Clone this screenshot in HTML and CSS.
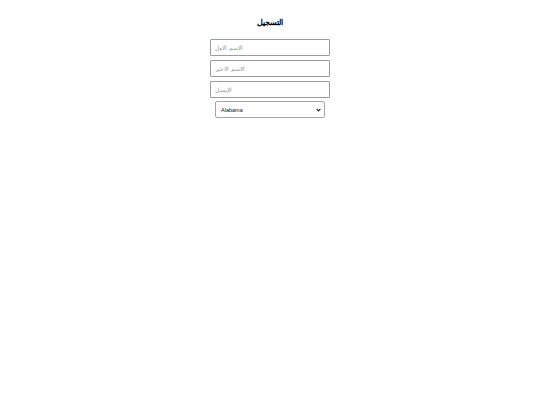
FILE: index.html
```html
<!DOCTYPE html>
<html lang="ar">
<head>
<meta charset="utf-8">
<link rel="stylesheet" href="styles.css">
</head>
<body>
<main class="page">
  <h1 class="title" dir="rtl">التسجيل</h1>
  <form class="form">
    <input class="field" type="text" placeholder="الاسم الأول">
    <input class="field" type="text" placeholder="الاسم الأخير">
    <input class="field" type="email" placeholder="الإيميل">
    <div class="select-wrap">
      <select class="state">
        <option>Alabama</option>
        <option>Alaska</option>
      </select>
      <svg class="arrow" width="5" height="4" viewBox="0 0 5 4"><path d="M0.6 0.8 L2.5 2.8 L4.4 0.8" fill="none" stroke="#222" stroke-width="1.2"/></svg>
    </div>
  </form>
</main>
</body>
</html>
```

FILE: styles.css
```css
html, body {
  margin: 0;
  padding: 0;
  background: #fff;
}
body {
  font-family: "Liberation Sans", Arial, sans-serif;
  width: 540px;
  height: 405px;
}
.page {
  display: flex;
  flex-direction: column;
  align-items: center;
  padding-top: 17px;
}
.title {
  margin: 0 0 10px 0;
  font-size: 8px;
  font-weight: bold;
  line-height: 12px;
  color: #000;
}
.form {
  display: flex;
  flex-direction: column;
  align-items: center;
  gap: 4px;
}
.field {
  box-sizing: border-box;
  width: 120px;
  height: 17px;
  margin: 0;
  padding: 0 4px;
  border: 1px solid #9c9c9c;
  border-radius: 1px;
  font-family: "Liberation Sans", Arial, sans-serif;
  font-size: 5.5px;
  color: #000;
  background: #fff;
  outline: none;
}
.field::placeholder {
  color: #9a9a9a;
}
.select-wrap {
  position: relative;
  width: 110px;
  height: 17px;
  margin-top: -1px;
}
.state {
  display: block;
  -webkit-appearance: none;
  appearance: none;
  box-sizing: border-box;
  width: 110px;
  height: 17px;
  margin: 0;
  padding: 0 5px;
  border: 1px solid #a5a5a5;
  border-radius: 2px;
  font-family: "Liberation Sans", Arial, sans-serif;
  font-size: 5.5px;
  color: #111;
  background: #fff;
}
.arrow {
  position: absolute;
  right: 4px;
  top: 7px;
  pointer-events: none;
}
```
